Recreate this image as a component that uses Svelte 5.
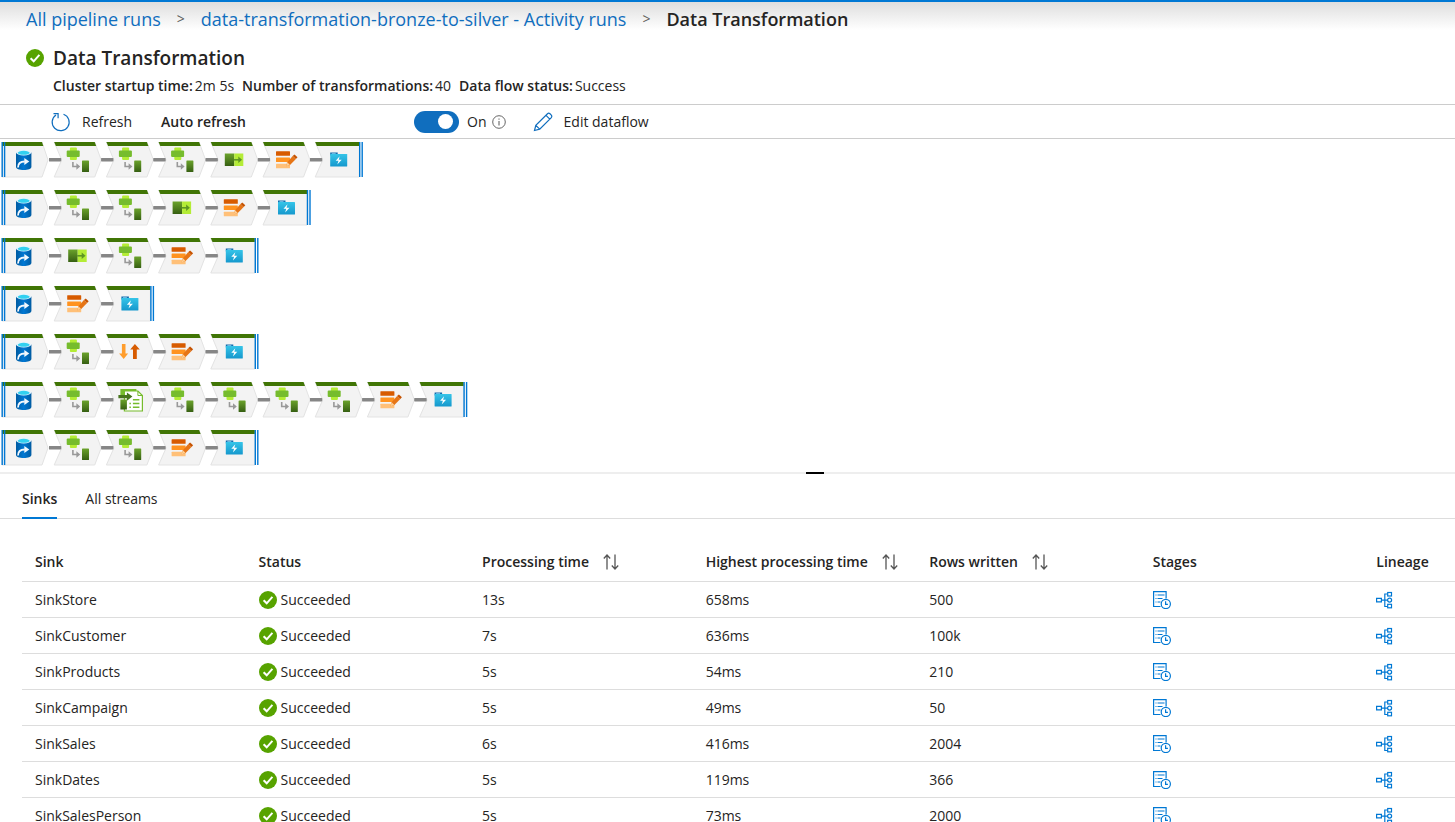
<script>
  const flows = [
    ['source', 'derive', 'derive', 'derive', 'select', 'alter', 'sink'],
    ['source', 'derive', 'derive', 'select', 'alter', 'sink'],
    ['source', 'select', 'derive', 'alter', 'sink'],
    ['source', 'alter', 'sink'],
    ['source', 'derive', 'sort', 'alter', 'sink'],
    ['source', 'derive', 'lookup', 'derive', 'derive', 'derive', 'derive', 'alter', 'sink'],
    ['source', 'derive', 'derive', 'alter', 'sink']
  ];
  const pitch = 52.2;

  const columns = [
    { title: 'Sink' },
    { title: 'Status' },
    { title: 'Processing time', sortable: true },
    { title: 'Highest processing time', sortable: true },
    { title: 'Rows written', sortable: true },
    { title: 'Stages' },
    { title: 'Lineage' }
  ];

  const sinks = [
    { name: 'SinkStore', time: '13s', highest: '658ms', rows: '500' },
    { name: 'SinkCustomer', time: '7s', highest: '636ms', rows: '100k' },
    { name: 'SinkProducts', time: '5s', highest: '54ms', rows: '210' },
    { name: 'SinkCampaign', time: '5s', highest: '49ms', rows: '50' },
    { name: 'SinkSales', time: '6s', highest: '416ms', rows: '2004' },
    { name: 'SinkDates', time: '5s', highest: '119ms', rows: '366' },
    { name: 'SinkSalesPerson', time: '5s', highest: '73ms', rows: '2000' }
  ];

  let autoRefresh = $state(true);
  let tab = $state('Sinks');
</script>

{#snippet check()}
  <svg class="check" width="18" height="18" viewBox="0 0 18 18" aria-hidden="true">
    <circle cx="9" cy="9" r="9" fill="#57a300" />
    <path d="M4.6 9.2 7.7 12.3 13.4 5.8" fill="none" stroke="#fff" stroke-width="2" />
  </svg>
{/snippet}

{#snippet glyph(kind)}
  {#if kind === 'source'}
    <path d="M15 10.500v14.500c0 1.700 3.500 3 7.700 3s7.700-1.300 7.700-3v-14.500z" fill="url(#cylinder)" />
    <ellipse cx="22.700" cy="10.500" rx="7.700" ry="2.900" fill="#e8f4fb" />
    <ellipse cx="22.700" cy="10.800" rx="6" ry="2" fill="#32d0f0" />
    <path d="M17 25.500c0-4.300 2.600-6 6.800-6" fill="none" stroke="#f2f8fd" stroke-width="1.800" />
    <path d="M23.300 16l5 3.500-5 3.500z" fill="#f2f8fd" />
  {:else if kind === 'derive'}
    <rect x="16.700" y="5.500" width="7" height="12.500" rx="1" fill="#b4ec36" />
    <rect x="13.500" y="8.500" width="13" height="6.500" rx="1" fill="#76bc2d" />
    <path d="M19.700 20v4.500h5" fill="none" stroke="#999" stroke-width="1.600" />
    <path d="M23.200 21.300l3.800 3.200-3.800 3.200z" fill="#999" />
    <rect x="28.800" y="18.500" width="7" height="11.500" rx=".6" fill="url(#green)" />
  {:else if kind === 'select'}
    <rect x="15" y="11.500" width="9.500" height="12.500" fill="url(#green)" />
    <rect x="24.500" y="11.500" width="9" height="12.500" fill="#b4ec36" />
    <path d="M24 17.800h6" stroke="#5e9624" stroke-width="1.600" />
    <path d="M28.500 14.600l3.800 3.200-3.800 3.200z" fill="#5e9624" />
  {:else if kind === 'alter'}
    <rect x="14" y="9.200" width="14" height="4.500" rx=".5" fill="#d75b00" />
    <rect x="14" y="15.500" width="14" height="4.500" rx=".5" fill="#ff9320" />
    <rect x="14" y="21.800" width="14" height="4.500" rx=".5" fill="#ffc078" />
    <path d="M24.100 24.300l1.200-4 5.400-6.200 3.200 2.900-5.900 6z" fill="#e67516" />
    <path d="M24.100 24.300l1.200-4 2.700 2.800z" fill="#ffcf93" />
    <path d="M30.700 14.100l1.800-1.700 3 2.900-1.600 1.700z" fill="#c65300" />
  {:else if kind === 'sort'}
    <path d="M16.500 10h3.600v9.500h2.600L18.300 25l-4.600-5.500h2.800z" fill="#ff9d2c" />
    <path d="M27.600 25h3.800V15.500h3L29.500 10l-4.700 5.500h2.800z" fill="#d75b00" />
  {:else if kind === 'lookup'}
    <rect x="15" y="7" width="16" height="7" fill="#76bc2d" />
    <path d="M19 9h13.500l4.500 4.500v15.500h-18z" fill="#fff" stroke="#76bc2d" stroke-width="1.200" />
    <path d="M32.500 9v4.500h4.500" fill="none" stroke="#76bc2d" />
    <rect x="15" y="17.500" width="6.500" height="10" fill="url(#green)" />
    <path d="M13 12.900h8.500v-2.500l5.500 4.200-5.500 4.200v-2.500h-8.500z" fill="#47751d" />
    <path d="M27.500 17.800h6.500M27.500 21.500h6.500M27.500 25.200h6.500M24 21.500h1.500M24 25.200h1.500" stroke="#76bc2d" stroke-width="1.400" />
  {:else}
    <path d="M16 10.500h7.500v3h-7.500z" fill="#0f6cad" />
    <rect x="17.500" y="11.300" width="4" height="1" fill="#8fd4f5" />
    <rect x="16" y="12" width="17" height="12.500" rx=".6" fill="url(#folder)" />
    <path d="M25.500 14.300l-4 4.500h2.800l-1.200 3.700 4.400-4.800h-3z" fill="#fff" />
  {/if}
{/snippet}

<svg class="defs" width="0" height="0" aria-hidden="true">
  <defs>
    <linearGradient id="cylinder"><stop offset="0" stop-color="#005ba1" /><stop offset=".5" stop-color="#0078d4" /><stop offset="1" stop-color="#005ba1" /></linearGradient>
    <linearGradient id="green" x2="0" y2="1"><stop offset="0" stop-color="#6ba32b" /><stop offset="1" stop-color="#365f12" /></linearGradient>
    <linearGradient id="folder" x2="0" y2="1"><stop offset="0" stop-color="#35c4e8" /><stop offset="1" stop-color="#1598cd" /></linearGradient>
  </defs>
</svg>

<header>
  <nav aria-label="Breadcrumb">
    <a href="#runs">All pipeline runs</a>
    <span class="sep">&gt;</span>
    <a href="#activity">data-transformation-bronze-to-silver - Activity runs</a>
    <span class="sep">&gt;</span>
    <strong>Data Transformation</strong>
  </nav>
  <div class="title">
    {@render check()}
    <h1>Data Transformation</h1>
  </div>
  <dl>
    <div><dt>Cluster startup time:</dt><dd>2m 5s</dd></div>
    <div><dt>Number of transformations:</dt><dd>40</dd></div>
    <div><dt>Data flow status:</dt><dd>Success</dd></div>
  </dl>
</header>

<div class="toolbar">
  <button class="refresh">
    <svg width="20" height="20" viewBox="0 0 20 20" fill="none" stroke="#106ebe" stroke-width="1.200" aria-hidden="true">
      <path d="M12.500 2.200A8.500 8.500 0 1 1 5 3.100M2.500 1.700h4.600v4.600" />
    </svg>
    Refresh
  </button>
  <label class="auto" for="auto">Auto refresh</label>
  <input id="auto" class="switch" type="checkbox" role="switch" bind:checked={autoRefresh} />
  <span class="state">{autoRefresh ? 'On' : 'Off'}</span>
  <svg class="info" width="14" height="14" viewBox="0 0 14 14" fill="none" stroke="#555" aria-hidden="true">
    <circle cx="7" cy="7" r="6.300" stroke-width=".9" /><path d="M7 6v4.500M7 3.500v1.200" />
  </svg>
  <button class="edit">
    <svg width="20" height="20" viewBox="0 0 20 20" fill="none" stroke="#106ebe" stroke-width="1.200" aria-hidden="true">
      <path d="M1.500 18.500l1.300-5.200L14.500 1.700q1.200-1 2.500.1l1.300 1.300q1 1.200 0 2.500L6.700 17.200zM13 3.300l3.800 3.800M2.800 13.300l3.900 3.900" />
    </svg>
    Edit dataflow
  </button>
</div>

<main class="graph">
  {#each flows as flow}
    <svg width={Math.ceil(flow.length * pitch)} height="36" aria-hidden="true">
      {#each flow as kind, i}
        {@const first = i === 0}
        {@const last = i === flow.length - 1}
        <g transform="translate({i * pitch} 0)">
          {#if first}
            <path d="M1 0H41L47 18 41 35H1z" fill="#f3f3f3" stroke="#e3e3e3" />
            <path d="M1 0H41L42.300 4H1z" fill="#407505" />
            <path d="M1.200 0v35M3.600 0v35" stroke="#0078d4" stroke-width="1.400" />
          {:else if last}
            <path d="M1 0H45V35H1L8.500 18z" fill="#f3f3f3" stroke="#e3e3e3" />
            <path d="M1 0H45V4H2.700z" fill="#407505" />
            <path d="M45.500 0v35M48 0v35" stroke="#0078d4" stroke-width="1.400" />
          {:else}
            <path d="M1 0H41.500L48 18 41.500 35H1L8.500 18z" fill="#f3f3f3" stroke="#e3e3e3" />
            <path d="M1 0H41.500L43 4H2.700z" fill="#407505" />
          {/if}
          {#if !last}<path d="M48 17.700h12" stroke="#868686" stroke-width="3.200" />{/if}
          {#if !first}<path d="M-4 17.700H8" stroke="#868686" stroke-width="3.200" />{/if}
          {@render glyph(kind)}
        </g>
      {/each}
    </svg>
  {/each}
</main>

<div class="splitter" role="separator"><span></span></div>

<div class="tabs" role="tablist">
  {#each ['Sinks', 'All streams'] as name}
    <button role="tab" aria-selected={tab === name} class:active={tab === name} onclick={() => (tab = name)}>{name}</button>
  {/each}
</div>

<section>
  <table>
    <thead>
      <tr>
        {#each columns as column}
          <th scope="col">
            <div class="head">
              {column.title}
              {#if column.sortable}
                <button class="sort" aria-label="Sort by {column.title}">
                  <svg width="16" height="16" viewBox="0 0 16 16" fill="none" stroke="#555" stroke-width="1.300" aria-hidden="true">
                    <path d="M4 15.500V1M.8 4.500 4 1l3.200 3.500M12 .5V15M8.800 11.500 12 15l3.200-3.500" />
                  </svg>
                </button>
              {/if}
            </div>
          </th>
        {/each}
      </tr>
    </thead>
    <tbody>
      {#each sinks as sink}
        <tr>
          <td>{sink.name}</td>
          <td><div class="status">{@render check()}Succeeded</div></td>
          <td>{sink.time}</td>
          <td>{sink.highest}</td>
          <td>{sink.rows}</td>
          <td>
            <button class="icon" aria-label="Stages of {sink.name}">
              <svg width="18" height="18" viewBox="0 0 18 18" fill="none" stroke="#0078d4" stroke-width="1.200" aria-hidden="true">
                <path d="M7.500 15.500H.6V.6h12.500v7" />
                <path d="M2.500 4h1M4.500 4h7M2.500 7.500h1M4.500 7.500h5M2.500 11h1M4.500 11h3" />
                <circle cx="12.800" cy="13" r="4.600" /><path d="M12.600 10.300v3h2.300" />
              </svg>
            </button>
          </td>
          <td>
            <button class="icon" aria-label="Lineage of {sink.name}">
              <svg width="18" height="18" viewBox="0 0 18 18" fill="none" stroke="#0078d4" stroke-width="1.200" aria-hidden="true">
                <path d="M.6 7.300h4.800v3.600H.6zM5.400 9.100h6.300M11.700 3H8.800v12.500h2.900" />
                <rect x="11.700" y="1.500" width="3.800" height="3.500" /><rect x="11.700" y="13.300" width="3.800" height="3.500" />
                <circle cx="13.600" cy="9.100" r="2" />
              </svg>
            </button>
          </td>
        </tr>
      {/each}
    </tbody>
  </table>
</section>

<style>
  :global(html) { overflow: hidden; }
  :global(body) {
    margin: 0;
    background: #fff;
    color: #252423;
    font: 14px/20px "Segoe UI", "Open Sans", "Noto Sans", sans-serif;
  }
  button { border: 0; padding: 0; background: none; font: inherit; color: inherit; cursor: pointer; }
  svg { display: block; flex: none; }
  .defs { position: absolute; }
  header {
    border-top: 2px solid #0078d4;
    border-bottom: 1px solid #ccc;
    padding: 3px 26px 8px;
    background: linear-gradient(#dedede, #fff 28px);
  }
  nav { display: flex; align-items: center; gap: 16px; font-size: 18px; line-height: 28px; white-space: nowrap; }
  nav a { color: #106ebe; text-decoration: none; }
  nav strong { font-weight: 600; }
  .sep { font-size: 14px; color: #605e5c; }
  .title { display: flex; align-items: center; gap: 9px; padding-top: 9px; }
  h1 { margin: 0; font-size: 19px; line-height: 32px; font-weight: 600; }
  dl { display: flex; gap: 8px; margin: 0; padding: 2px 0 0 27px; white-space: nowrap; }
  dl div { display: flex; gap: 2px; }
  dt { font-weight: 600; }
  dd { margin: 0; }
  .toolbar { display: flex; align-items: center; height: 33px; padding-left: 51px; border-bottom: 1px solid #ccc; white-space: nowrap; }
  .refresh, .edit { display: flex; align-items: center; gap: 11px; }
  .auto { width: 225px; margin: 0 0 0 29px; padding-right: 28px; font-weight: 600; }
  .switch { appearance: none; display: flex; align-items: center; justify-content: flex-end; box-sizing: border-box; width: 45px; height: 22px; margin: 0 8px 0 0; padding: 0 6px; border-radius: 11px; background: #106ebe; }
  .switch:not(:checked) { justify-content: flex-start; background: #777; }
  .switch::before { content: ""; width: 15px; height: 15px; border-radius: 50%; background: #fff; }
  .info { margin: 0 27px 0 5px; }
  .graph { display: flex; flex-direction: column; gap: 12px; padding: 3px 0 6px 1px; overflow: hidden; }
  .splitter { height: 2px; background: #eee; display: flex; justify-content: center; padding-left: 12%; }
  .splitter span { width: 18px; background: #000; }
  .tabs { display: flex; gap: 28px; height: 44px; padding-left: 22px; border-bottom: 1px solid #ddd; }
  .tabs button { margin-bottom: -1px; padding-top: 7px; border-bottom: 2px solid transparent; }
  .tabs .active { border-color: #0078d4; font-weight: 600; }
  section { padding: 24px 0 0 22px; }
  table { width: 100%; table-layout: fixed; border-collapse: collapse; }
  th, td { box-sizing: border-box; height: 36px; padding: 2px 0 0 13px; border-bottom: 1px solid #ddd; text-align: left; white-space: nowrap; }
  th { height: 38px; padding-top: 0; font-weight: 600; }
  th:not(:last-child) { width: 15.6%; }
  .head { display: flex; align-items: center; gap: 14px; }
  .status { display: flex; align-items: center; gap: 4px; }
  .icon { display: block; }
</style>
